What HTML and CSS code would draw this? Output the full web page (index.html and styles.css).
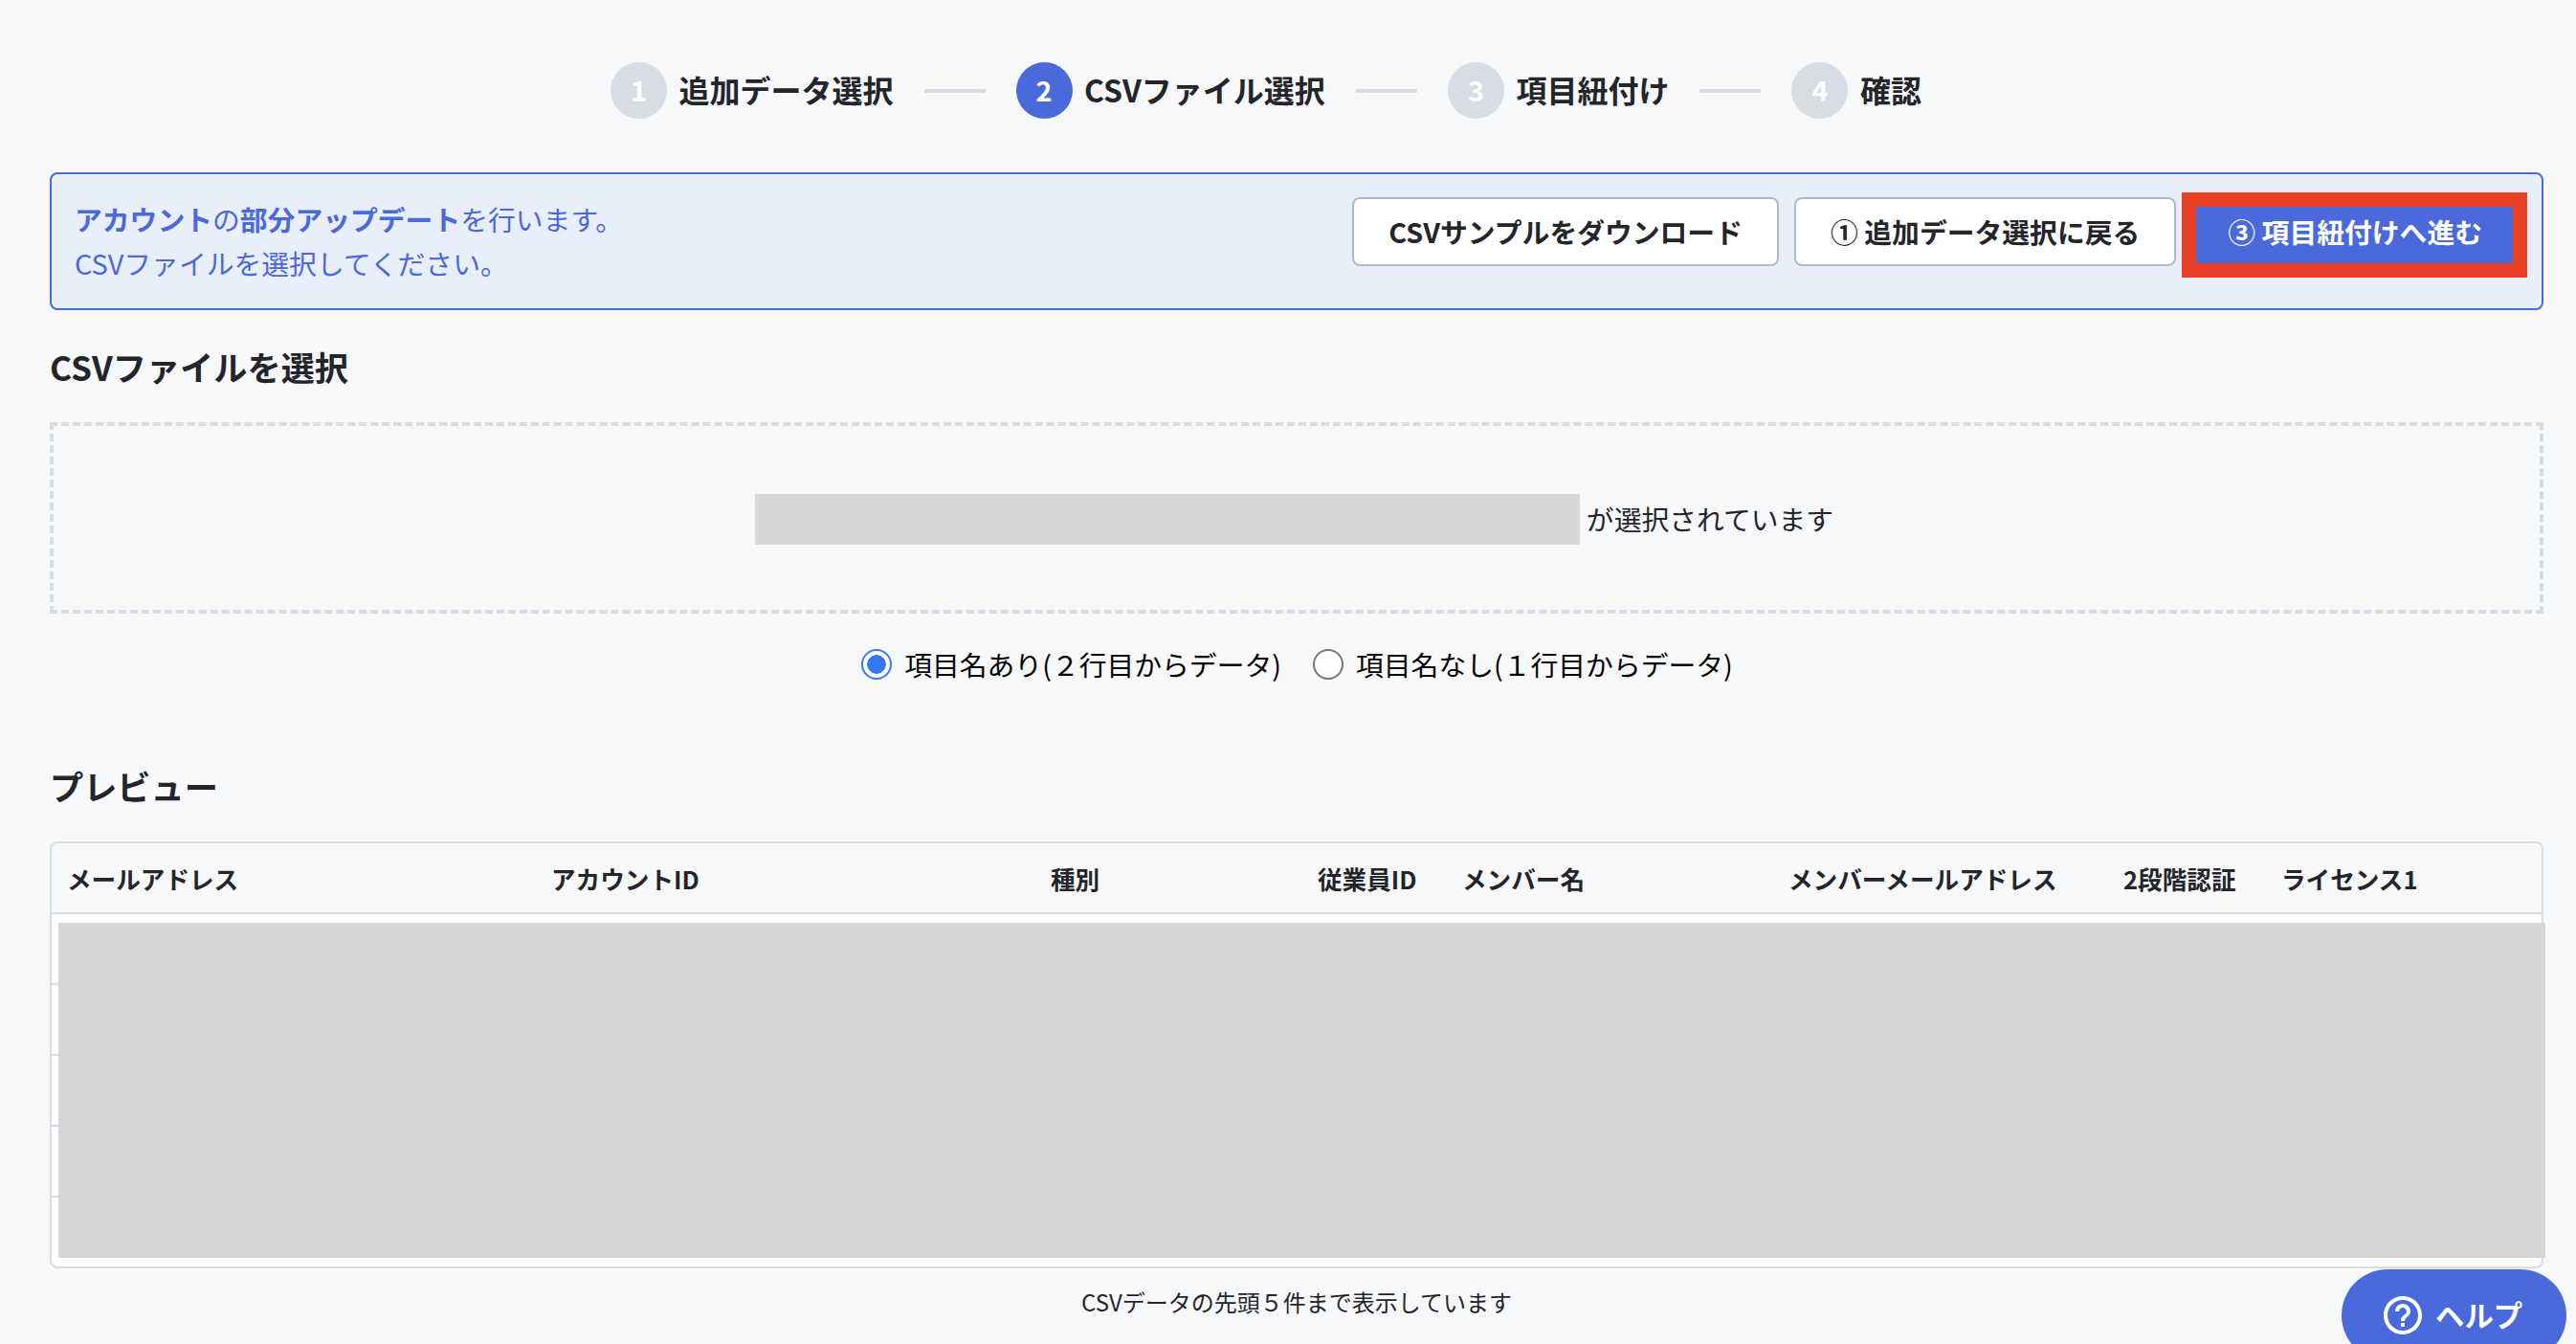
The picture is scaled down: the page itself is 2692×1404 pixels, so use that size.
FILE: index.html
```html
<!DOCTYPE html>
<html lang="ja">
<head>
    <meta charset="UTF-8">
    <meta name="viewport" content="width=device-width, initial-scale=1.0">
    <title>CSVファイル選択</title>
    <link rel="stylesheet" href="styles.css">
</head>
<body>
<div class="page">
    <!-- Steps -->
    <ol class="steps">
        <li class="step"><span class="step__number">1</span><span class="step__label">追加データ選択</span></li>
        <li class="step step--active"><span class="step__number">2</span><span class="step__label">CSVファイル選択</span></li>
        <li class="step"><span class="step__number">3</span><span class="step__label">項目紐付け</span></li>
        <li class="step"><span class="step__number">4</span><span class="step__label">確認</span></li>
    </ol>

    <!-- Information -->
    <div class="info">
        <p class="info__text"><b>アカウント</b>の<b>部分アップデート</b>を行います。<br>CSVファイルを選択してください。</p>
        <div class="info__buttons">
            <button class="btn" type="button">CSVサンプルをダウンロード</button>
            <button class="btn" type="button">① 追加データ選択に戻る</button>
            <button class="btn btn--primary" type="button">③ 項目紐付けへ進む</button>
        </div>
    </div>

    <!-- File -->
    <h2 class="title">CSVファイルを選択</h2>
    <div class="dropzone">
        <span class="dropzone__file"></span>
        <span>が選択されています</span>
    </div>
    <div class="options">
        <label class="option">
            <input type="radio" class="radio" name="header" checked>項目名あり(２行目からデータ)
        </label>
        <label class="option">
            <input type="radio" class="radio" name="header">項目名なし(１行目からデータ)
        </label>
    </div>

    <!-- Preview -->
    <h2 class="title title--preview">プレビュー</h2>
    <div class="preview">
        <div class="preview__row preview__row--head">
            <span>メールアドレス</span>
            <span>アカウントID</span>
            <span>種別</span>
            <span>従業員ID</span>
            <span>メンバー名</span>
            <span>メンバーメールアドレス</span>
            <span>2段階認証</span>
            <span>ライセンス1</span>
        </div>
        <div class="preview__row"></div>
        <div class="preview__row"></div>
        <div class="preview__row"></div>
        <div class="preview__row"></div>
        <div class="preview__row"></div>
        <div class="preview__mask"></div>
    </div>
    <p class="note">CSVデータの先頭５件まで表示しています</p>
</div>

<button class="help" type="button">
    <svg class="help__icon" viewBox="0 0 24 24" fill="currentColor">
        <path d="M11 18h2v-2h-2v2zm1-16C6.48 2 2 6.48 2 12s4.480 10 10 10 10-4.480 10-10S17.520 2 12 2zm0 18c-4.410 0-8-3.590-8-8s3.590-8 8-8 8 3.590 8 8-3.590 8-8 8zm0-14c-2.210 0-4 1.790-4 4h2c0-1.100.9-2 2-2s2 .9 2 2c0 2-3 1.750-3 5h2c0-2.250 3-2.500 3-5 0-2.210-1.790-4-4-4z"/>
    </svg>
    <span class="help__label">ヘルプ</span>
</button>
</body>
</html>
```

FILE: styles.css
```css
:root {
    /* COLORS */
    --background: #f7f8fa;
    --text: #23252b;
    --blue: #4a69db;
    --lightblue: #e8eefa;
    --border: #d8dce5;
    --mask: #d6d6d6;
    --red: #ea4026;

    font-size: 16px;
    font-family: "Noto Sans CJK JP", sans-serif;
}

* {
    box-sizing: border-box;
}

body {
    background-color: var(--background);
    color: var(--text);
    height: 1404px;
    margin: 0;
    overflow: hidden;
}

.page {
    padding: 65px 34px 0 52px;
}

/* STEPS */
.steps {
    display: flex;
    font-size: 32px;
    font-weight: bold;
    justify-content: center;
    line-height: 59px;
    list-style: none;
    margin: 0;
    padding: 0 64px 0 0;
}

.step {
    align-items: center;
    display: flex;
}

.step:not(:last-child)::after {
    background-color: var(--border);
    content: "";
    height: 4px;
    margin: 0 32px;
    width: 64px;
}

.step__number {
    background-color: var(--border);
    border-radius: 50%;
    color: #fff;
    font-size: 28.8px;
    height: 59px;
    line-height: 58px;
    margin-right: 12.5px;
    text-align: center;
    width: 59px;
}

.step__label {
    height: 59px;
    line-height: 56px;
}

.step--active .step__number {
    background-color: var(--blue);
}

/* INFORMATION */
.info {
    background-color: var(--lightblue);
    border: 2px solid var(--blue);
    border-radius: 8px;
    color: var(--blue);
    display: flex;
    font-size: 28.8px;
    height: 144px;
    justify-content: space-between;
    line-height: 46px;
    margin-top: 56px;
    padding: 24px;
}

.info__text {
    margin: 0;
}

.info__buttons {
    display: flex;
    gap: 16px;
}

.btn {
    background-color: #fff;
    border: 2px solid #b1b8c7;
    border-radius: 8px;
    color: var(--text);
    font-family: inherit;
    font-size: 28.8px;
    font-weight: bold;
    height: 72px;
    padding: 0 36px 1px;
    white-space: nowrap;
}

.btn--primary {
    background-color: var(--blue);
    border-color: var(--blue);
    color: #fff;
    position: relative;
}

/* red frame around the next button */
.btn--primary::after {
    border: 15px solid var(--red);
    content: "";
    inset: -7px -11px -14px -12px;
    position: absolute;
}

/* FILE */
.title {
    font-size: 35.2px;
    line-height: 56px;
    margin: 31px 0 30px;
}

.dropzone {
    align-items: center;
    border: 4px dashed var(--border);
    display: flex;
    font-size: 28.8px;
    gap: 7px;
    height: 200px;
    justify-content: center;
    padding-right: 5px;
}

.dropzone__file {
    background-color: var(--mask);
    height: 53px;
    margin-top: 3px;
    width: 862px;
}

.options {
    color: #000;
    display: flex;
    font-size: 28.8px;
    gap: 33px;
    justify-content: center;
    line-height: 46px;
    margin-top: 30px;
    padding-left: 1px;
}

.option {
    align-items: center;
    display: flex;
}

.radio {
    appearance: none;
    background-color: #fff;
    border: 2.5px solid #767676;
    border-radius: 50%;
    height: 32px;
    margin: 0 13px 0 0;
    width: 32px;
}

.radio:checked {
    background: radial-gradient(circle, #3478f6 9.5px, #fff 10px);
    border-color: #3478f6;
}

/* PREVIEW */
.title--preview {
    margin: 76px 0 30px;
}

.preview {
    background-color: #fff;
    border: 2px solid var(--border);
    border-radius: 8px;
    position: relative;
}

.preview__row {
    border-bottom: 2px solid var(--border);
    height: 74px;
}

.preview__row:nth-child(6) {
    border-bottom: none;
    height: 72px;
}

.preview__row--head {
    align-items: center;
    background-color: var(--background);
    border-radius: 6px 6px 0 0;
    display: grid;
    font-size: 25.6px;
    font-weight: bold;
    grid-template-columns: 506px 522px 279px 151px 341px 350px 165px auto;
    padding-left: 16px;
    white-space: nowrap;
}

.preview__mask {
    background-color: var(--mask);
    inset: 83px -4px 9px 7px;
    position: absolute;
}

.note {
    font-size: 24px;
    line-height: 38px;
    margin: 16px 0 0;
    text-align: center;
}

/* HELP */
.help {
    align-items: center;
    background-color: var(--blue);
    border: none;
    border-radius: 48px;
    color: #fff;
    display: flex;
    font-family: inherit;
    font-size: 30.4px;
    font-weight: bold;
    gap: 10px;
    height: 96px;
    left: 2447px;
    padding: 0 0 0 40px;
    position: fixed;
    top: 1326px;
    width: 235px;
}

.help__icon {
    height: 48px;
    width: 48px;
}

.help__label {
    padding-bottom: 2px;
}
```
